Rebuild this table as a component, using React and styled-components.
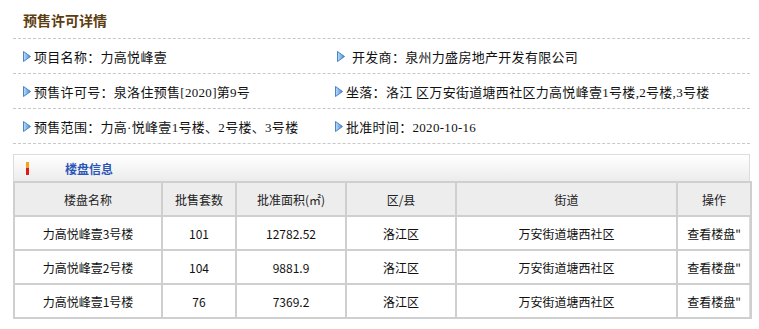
import React from "react";
import styled, { createGlobalStyle } from "styled-components";

const GlobalStyle = createGlobalStyle`
  body {
    margin: 0;
    background: #fff;
    font-family: "Noto Sans CJK SC", sans-serif;
    color: #222;
  }
`;

const Page = styled.div`
  width: 737px;
  padding-left: 13px;
`;

const Title = styled.h2`
  margin: 0;
  height: 38px;
  padding-left: 10px;
  font-size: 14px;
  line-height: 40px;
  font-weight: bold;
  color: #5c3d10;
`;

const InfoList = styled.div`
  border-top: 1px dashed #c8c8c8;
`;

const InfoRow = styled.div`
  display: grid;
  grid-template-columns: 320px 1fr;
  height: 34px;
  border-bottom: 1px dashed #c8c8c8;
`;

const InfoCell = styled.div`
  display: flex;
  align-items: center;
  gap: ${(p) => (p.$wide ? "7px" : "3px")};
  padding-left: ${(p) => (p.$right ? (p.$wide ? "4px" : "2px") : "10px")};
  font-family: "Liberation Serif", "Noto Sans CJK SC", serif;
  font-size: 13px;
  letter-spacing: 0.3px;
  color: #111;
  white-space: nowrap;
`;

const Panel = styled.div`
  margin-top: 10px;
  border: 1px solid #dcdcdc;
  border-bottom: none;
`;

const PanelHead = styled.div`
  display: flex;
  align-items: center;
  height: 26px;
  padding-left: 12px;
  background: linear-gradient(#ffffff, #ececec);
`;

const Marker = styled.span`
  width: 3px;
  height: 13px;
  background: linear-gradient(#f7a21b 0 45%, #e01a1a 45% 100%);
`;

const PanelTitle = styled.span`
  margin-left: 36px;
  font-size: 12px;
  font-weight: bold;
  color: #2b56b8;
`;

const Table = styled.table`
  width: 737px;
  margin-left: -1px;
  border-collapse: collapse;
  table-layout: fixed;
  font-size: 12px;
`;

const Th = styled.th`
  height: 30px;
  border: 2px solid #cfcfcf;
  background: #ededed;
  font-weight: normal;
  color: #222;
  text-align: center;
`;

const Td = styled.td`
  height: 30px;
  border: 2px solid #cfcfcf;
  text-align: center;
  color: #111;
`;

const Arrow = () => (
  <svg width="8" height="11" viewBox="0 0 8 11">
    <defs>
      <linearGradient id="ag" x1="0" y1="0" x2="1" y2="0">
        <stop offset="0" stopColor="#bfe0fb" />
        <stop offset="1" stopColor="#3d86d6" />
      </linearGradient>
    </defs>
    <polygon points="0.5,0.5 7.5,5.5 0.5,10.5" fill="url(#ag)" stroke="#4a84c4" strokeWidth="1" />
  </svg>
);

const info = [
  [
    { text: "项目名称：力高悦峰壹" },
    { text: "开发商：泉州力盛房地产开发有限公司", wide: true },
  ],
  [
    { text: "预售许可号：泉洛住预售[2020]第9号" },
    { text: "坐落：洛江 区万安街道塘西社区力高悦峰壹1号楼,2号楼,3号楼" },
  ],
  [
    { text: "预售范围：力高·悦峰壹1号楼、2号楼、3号楼" },
    { text: "批准时间：2020-10-16" },
  ],
];

const columns = [
  ["楼盘名称", 148],
  ["批售套数", 74],
  ["批准面积(㎡)", 110],
  ["区/县", 110],
  ["街道", 221],
  ["操作", 74],
];

const rows = [
  ["力高悦峰壹3号楼", "101", "12782.52"],
  ["力高悦峰壹2号楼", "104", "9881.9"],
  ["力高悦峰壹1号楼", "76", "7369.2"],
];

const App = () => (
  <Page>
    <GlobalStyle />
    <Title>预售许可详情</Title>
    <InfoList>
      {info.map((row, i) => (
        <InfoRow key={i}>
          {row.map((cell, j) => (
            <InfoCell key={j} $right={j === 1} $wide={cell.wide}>
              <Arrow />
              {cell.text}
            </InfoCell>
          ))}
        </InfoRow>
      ))}
    </InfoList>
    <Panel>
      <PanelHead>
        <Marker />
        <PanelTitle>楼盘信息</PanelTitle>
      </PanelHead>
      <Table>
        <colgroup>
          {columns.map(([name, w]) => (
            <col key={name} style={{ width: w }} />
          ))}
        </colgroup>
        <thead>
          <tr>
            {columns.map(([name]) => (
              <Th key={name}>{name}</Th>
            ))}
          </tr>
        </thead>
        <tbody>
          {rows.map((r) => (
            <tr key={r[0]}>
              <Td>{r[0]}</Td>
              <Td>{r[1]}</Td>
              <Td>{r[2]}</Td>
              <Td>洛江区</Td>
              <Td>万安街道塘西社区</Td>
              <Td>查看楼盘"</Td>
            </tr>
          ))}
        </tbody>
      </Table>
    </Panel>
  </Page>
);

export default App;
